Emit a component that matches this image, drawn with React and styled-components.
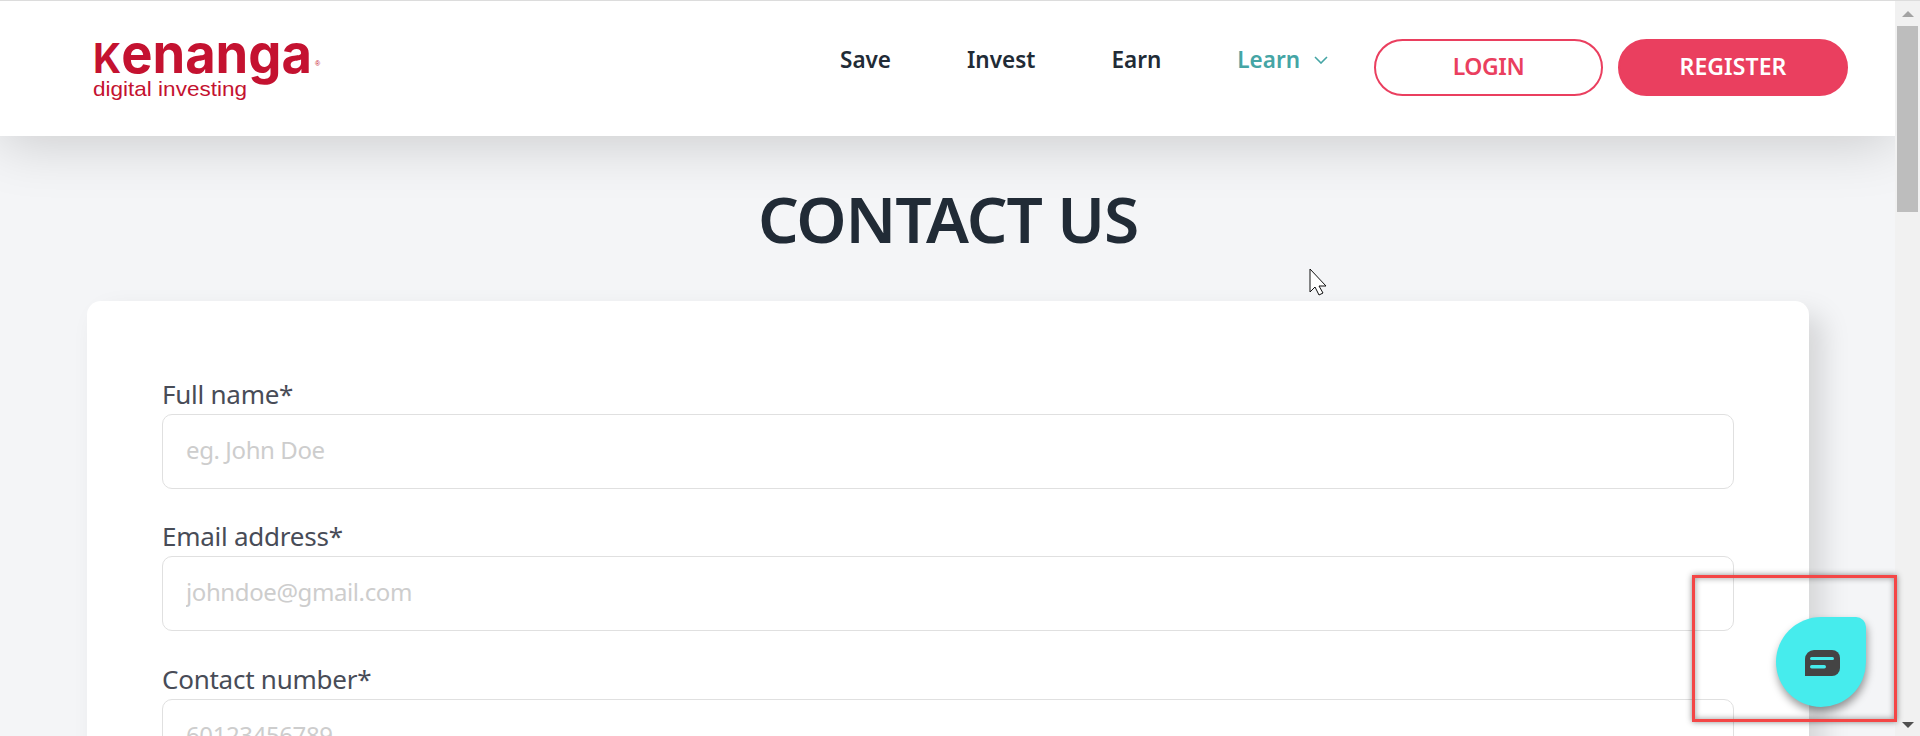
import React from "react";
import styled, { createGlobalStyle } from "styled-components";

const FONT = `"Noto Sans", "Open Sans", sans-serif`;

const Global = createGlobalStyle`
  html, body { margin: 0; padding: 0; height: 736px; overflow: hidden; background: #f4f5f7; font-family: ${FONT}; }
  * { box-sizing: border-box; }
`;

const Shell = styled.div`
  position: relative; display: flex; height: 736px; overflow: hidden;
  border-top: 1px solid #dcdcdc;
`;
const Page = styled.div`
  flex: 1; min-width: 0; height: 100%; overflow: hidden;
  background: #f4f5f7;
`;
const Header = styled.header`
  position: relative; z-index: 2;
  display: flex; justify-content: space-between; align-items: flex-start;
  height: 135px; padding: 0 47px 0 93px; background: #fff;
  box-shadow: 0 8px 55px rgba(0, 0, 0, 0.17);
`;
const LogoBox = styled.a`
  display: block; margin-top: 36px; width: 226px; height: 62px; color: #c41230;
`;
const LogoSvg = styled.svg`
  display: block; overflow: visible;
`;
const Right = styled.div`
  display: flex; align-items: flex-start; padding-top: 38px;
`;
const Nav = styled.nav`
  display: flex; gap: 76px; margin-right: 46px; padding-top: 6px;
`;
const NavItem = styled.a`
  display: flex; align-items: center; gap: 14px;
  height: 30px;
  font-size: 22.5px; font-weight: 600; line-height: 30px;
  color: ${p => (p.$active ? "#45a5a5" : "#212b36")};
`;
const Pill = styled.button`
  display: flex; align-items: center; justify-content: center;
  width: ${p => p.$w}px; height: 57px; margin-left: ${p => p.$ml || 0}px;
  padding: 0 0 4px;
  border-radius: 29px; border: 2px solid #ea3f5f;
  font-family: ${FONT}; font-size: 23px; font-weight: 600;
  letter-spacing: ${p => (p.$solid ? "0.1px" : "-0.4px")};
  background: ${p => (p.$solid ? "#ea3f5f" : "#fff")};
  color: ${p => (p.$solid ? "#fff" : "#ea3f5f")};
`;
const Title = styled.h1`
  margin: 0; padding-top: 40px; height: 165px;
  text-align: center;
  font-size: 64px; line-height: 86px; font-weight: 600; letter-spacing: -1.1px;
  color: #212b36;
  width: 1896px;
`;
const Card = styled.main`
  margin: 0 86px 0 87px; height: 600px;
  padding: 77px 75px 0 75px;
  background: #fff; border-radius: 14px;
  box-shadow: 14px 14px 28px rgba(0, 0, 0, 0.13);
`;
const Field = styled.div`
  margin-bottom: 31px;
  &:nth-child(2) { margin-bottom: 32px; }
`;
const Label = styled.label`
  display: block; height: 36px;
  font-size: 26px; line-height: 32px; color: #484c57; letter-spacing: -0.25px;
`;
const Input = styled.input`
  display: block; width: 100%; height: 75px; padding: 0 23px 4px;
  border: 1px solid #e0e0e0; border-radius: 10px; background: #fff; outline: none;
  font-family: ${FONT}; font-size: 24px; letter-spacing: -0.4px;
  &::placeholder { color: #cdcdcd; opacity: 1; }
`;
const Scrollbar = styled.div`
  position: relative; z-index: 3;
  display: flex; flex-direction: column; align-items: center; justify-content: space-between;
  width: 25px; height: 100%; padding: 10px 0 8px; background: #f1f1f1;
`;
const Thumb = styled.div`
  position: absolute; top: 25px; left: 2px; width: 21px; height: 186px; background: #bdbdbd;
`;
const Arrow = styled.div`
  width: 0; height: 0; border-left: 6px solid transparent; border-right: 6px solid transparent;
  ${p => (p.$down ? "border-top: 6px solid #505050;" : "border-bottom: 6px solid #a3a3a3;")}
`;
const ChatBubble = styled.button`
  position: absolute; left: 1776px; top: 616px; z-index: 6;
  display: flex; align-items: center; justify-content: center;
  width: 90px; height: 90px; padding: 2px 0 0 3px; border: 0;
  border-radius: 50% 10px 50% 50%;
  background: #46eced;
  box-shadow: 1px 5px 9px rgba(0, 0, 0, 0.4);
`;
const Highlight = styled.div`
  position: absolute; left: 1692px; top: 574px; z-index: 5;
  width: 205px; height: 147px;
  border: 3px solid #f44646;
  box-shadow: 0 0 6px rgba(0, 0, 0, 0.45), inset 0 0 6px rgba(0, 0, 0, 0.4);
`;
const Cursor = styled.svg`
  position: absolute; left: 1309px; top: 267px; z-index: 6;
`;

const Logo = () => (
  <LogoSvg width="226" height="62" viewBox="0 0 226 62">
    <text x="0" y="36" fill="currentColor" fontFamily="Inter, sans-serif" fontWeight="700" fontSize="55" textLength="219" lengthAdjust="spacingAndGlyphs">
      <tspan fontSize="41">K</tspan>enanga
    </text>
    <text x="222" y="29" fill="currentColor" fontFamily="Liberation Sans, sans-serif" fontSize="7">®</text>
    <text x="0" y="59" fill="currentColor" fontFamily="Liberation Sans, sans-serif" fontSize="21" textLength="154" lengthAdjust="spacingAndGlyphs">digital investing</text>
  </LogoSvg>
);

const Chevron = () => (
  <svg width="14" height="8" viewBox="0 0 14 8" fill="none" stroke="#45a5a5" strokeWidth="1.6">
    <path d="M1 1l6 6 6-6" />
  </svg>
);

const ChatIcon = () => (
  <svg width="35" height="26" viewBox="0 0 35 26">
    <path d="M9 0h18a8 8 0 0 1 8 8v10a8 8 0 0 1-8 8H0V9a9 9 0 0 1 9-9z" fill="#444" />
    <rect x="5" y="7" width="24" height="3" rx="1.5" fill="#46eced" />
    <rect x="5" y="15" width="16" height="3.500" rx="1.7" fill="#46eced" />
  </svg>
);

const fields = [
  { label: "Full name*", ph: "eg. John Doe" },
  { label: "Email address*", ph: "johndoe@gmail.com" },
  { label: "Contact number*", ph: "60123456789" },
];

export default function App() {
  return (
    <>
      <Global />
      <Shell>
        <Page>
          <Header>
            <LogoBox><Logo /></LogoBox>
            <Right>
              <Nav>
                <NavItem>Save</NavItem>
                <NavItem>Invest</NavItem>
                <NavItem>Earn</NavItem>
                <NavItem $active>Learn <Chevron /></NavItem>
              </Nav>
              <Pill $w={229}>LOGIN</Pill>
              <Pill $w={230} $ml={15} $solid>REGISTER</Pill>
            </Right>
          </Header>
          <Title>CONTACT US</Title>
          <Card>
            {fields.map(f => (
              <Field key={f.label}>
                <Label>{f.label}</Label>
                <Input placeholder={f.ph} readOnly />
              </Field>
            ))}
          </Card>
        </Page>
        <Scrollbar>
          <Arrow />
          <Thumb />
          <Arrow $down />
        </Scrollbar>
        <Highlight />
        <ChatBubble aria-label="Chat"><ChatIcon /></ChatBubble>
        <Cursor width="19" height="28" viewBox="0 0 19 28">
          <path d="M1 1v23l5-5 4 8 4-2-4-7h7z" fill="#fff" stroke="#111" strokeWidth="1" />
        </Cursor>
      </Shell>
    </>
  );
}
